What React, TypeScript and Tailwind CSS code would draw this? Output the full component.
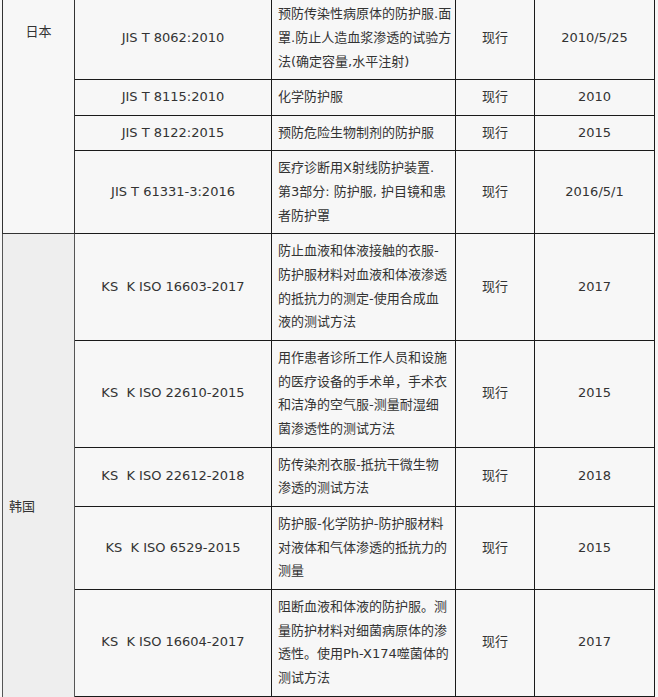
const rows = [
  {
    code: "JIS T 8062:2010",
    desc: ["预防传染性病原体的防护服.面", "罩.防止人造血浆渗透的试验方", "法(确定容量,水平注射)"],
    date: "2010/5/25",
  },
  { code: "JIS T 8115:2010", desc: ["化学防护服"], date: "2010" },
  { code: "JIS T 8122:2015", desc: ["预防危险生物制剂的防护服"], date: "2015" },
  {
    code: "JIS T 61331-3:2016",
    desc: ["医疗诊断用X射线防护装置.", "第3部分: 防护服, 护目镜和患", "者防护罩"],
    date: "2016/5/1",
  },
  {
    code: "KS\u00a0 K ISO 16603-2017",
    desc: ["防止血液和体液接触的衣服-", "防护服材料对血液和体液渗透", "的抵抗力的测定-使用合成血", "液的测试方法"],
    date: "2017",
  },
  {
    code: "KS\u00a0 K ISO 22610-2015",
    desc: ["用作患者诊所工作人员和设施", "的医疗设备的手术单，手术衣", "和洁净的空气服-测量耐湿细", "菌渗透性的测试方法"],
    date: "2015",
  },
  {
    code: "KS\u00a0 K ISO 22612-2018",
    desc: ["防传染剂衣服-抵抗干微生物", "渗透的测试方法"],
    date: "2018",
  },
  {
    code: "KS\u00a0 K ISO 6529-2015",
    desc: ["防护服-化学防护-防护服材料", "对液体和气体渗透的抵抗力的", "测量"],
    date: "2015",
  },
  {
    code: "KS\u00a0 K ISO 16604-2017",
    desc: ["阻断血液和体液的防护服。测", "量防护材料对细菌病原体的渗", "透性。使用Ph-X174噬菌体的", "测试方法"],
    date: "2017",
  },
];

const base = "border-[#1a1a1a] px-[6px] pb-[5.75px] leading-[23.75px]";
const cellFor = (i: number) =>
  i === 0 ? `${base} border-x border-b pt-[2px]` : `${base} border pt-[5px]`;

export default function App() {
  return (
    <div
      className="min-h-[697px] bg-[#f7f7f7] pl-[2px] pr-[4px] text-[13px] text-[#333]"
      style={{ fontFamily: '"DejaVu Sans", "Noto Sans CJK SC", sans-serif' }}
    >
      <table className="w-[652px] table-fixed border-collapse">
        <colgroup>
          <col className="w-[72px]" />
          <col className="w-[197px]" />
          <col className="w-[184px]" />
          <col className="w-[79px]" />
          <col className="w-[120px]" />
        </colgroup>
        <tbody>
          {rows.map((r, i) => (
            <tr key={i}>
              {i === 0 && (
                <td
                  rowSpan={4}
                  className="border-x border-b border-[#333] px-[6px] pt-[20px] text-center align-top leading-[23.75px]"
                >
                  日本
                </td>
              )}
              {i === 4 && (
                <td
                  rowSpan={6}
                  className="border border-[#555] bg-[#eeeeee] px-[6px] pt-[261px] text-left align-top leading-[23.75px]"
                >
                  韩国
                </td>
              )}
              <td className={`${cellFor(i)} text-center`}>{r.code}</td>
              <td className={`${cellFor(i)} text-left`}>
                {r.desc.map((line, j) => (
                  <span key={j} className="block whitespace-nowrap">
                    {line}
                  </span>
                ))}
              </td>
              <td className={`${cellFor(i)} text-center`}>现行</td>
              <td className={`${cellFor(i)} text-center`}>{r.date}</td>
            </tr>
          ))}
          <tr>
            <td className={`${cellFor(1)} h-[60px]`}></td>
            <td className={cellFor(1)}></td>
            <td className={cellFor(1)}></td>
            <td className={cellFor(1)}></td>
          </tr>
        </tbody>
      </table>
    </div>
  );
}
